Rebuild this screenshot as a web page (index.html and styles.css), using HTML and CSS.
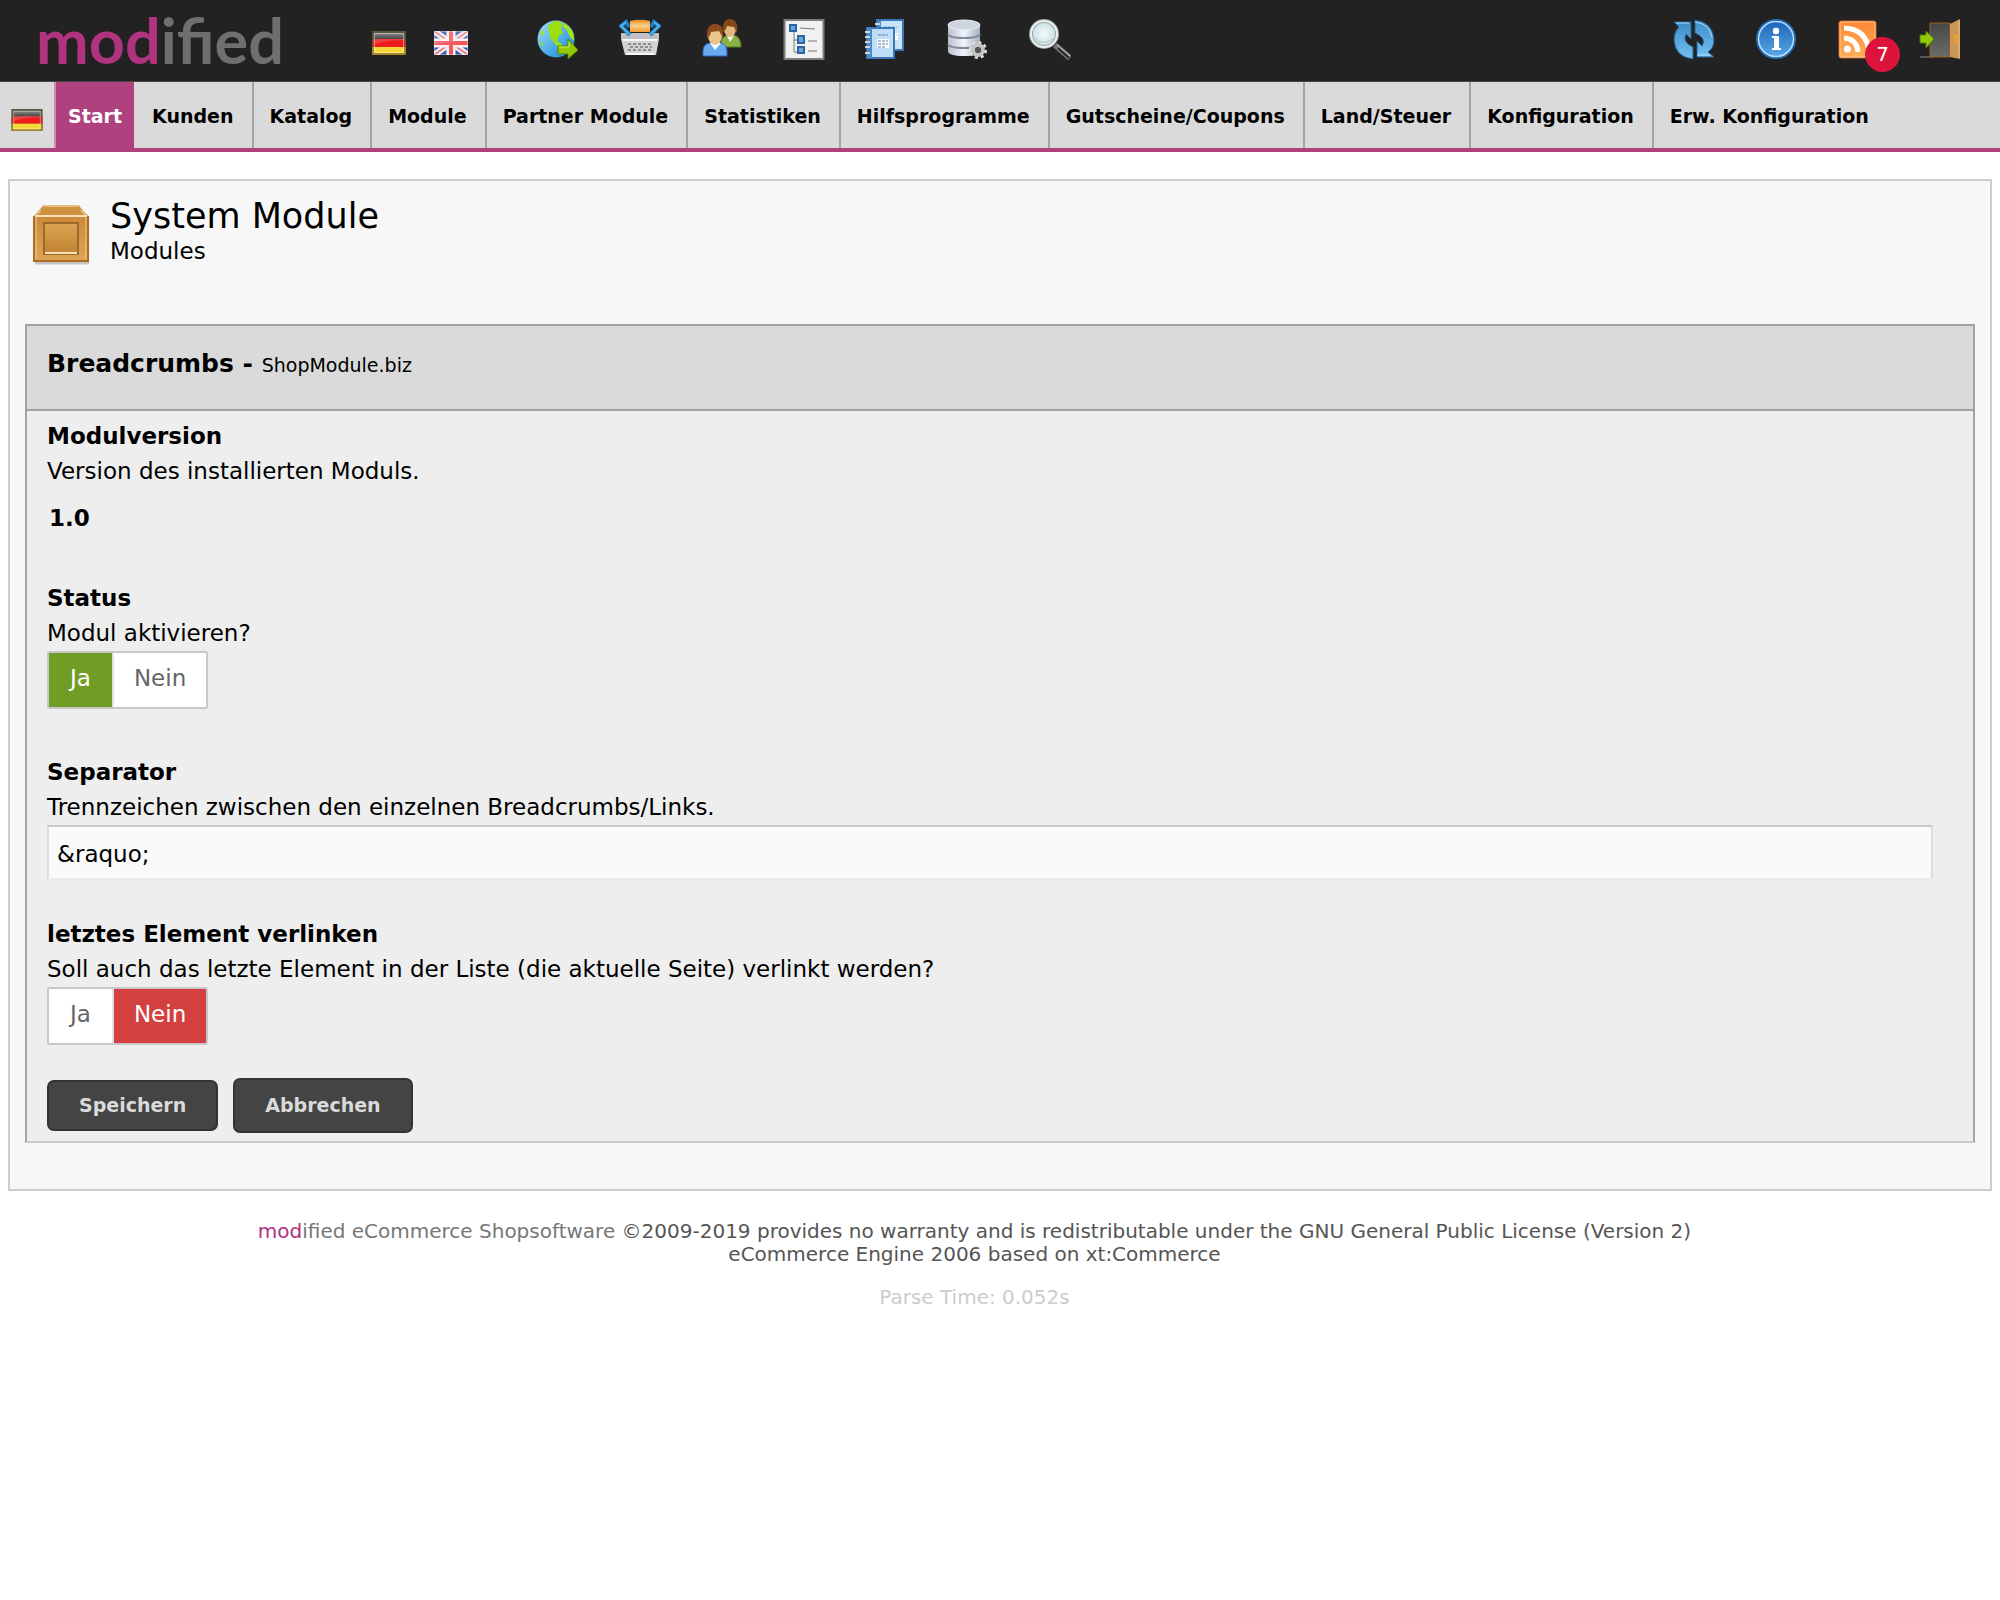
FILE: index.html
```html
<!DOCTYPE html>
<html lang="de">
<head>
<meta charset="utf-8">
<title>System Module</title>
<link rel="stylesheet" href="styles.css">
</head>
<body>
<svg class="defs" aria-hidden="true">
  <defs>
    <linearGradient id="blue" x1="0" y1="0" x2="1" y2="1"><stop offset="0" stop-color="#a5def8"/><stop offset="1" stop-color="#0b86d6"/></linearGradient>
    <linearGradient id="sky" x1="0" y1="0" x2="0" y2="1"><stop offset="0" stop-color="#3c8cc8"/><stop offset="1" stop-color="#74bff2"/></linearGradient>
    <linearGradient id="info" x1="0" y1="0" x2="0" y2="1"><stop offset="0" stop-color="#1c63b8"/><stop offset="1" stop-color="#5aaae8"/></linearGradient>
    <linearGradient id="rss" x1="0" y1="0" x2="0" y2="1"><stop offset="0" stop-color="#ff8636"/><stop offset="1" stop-color="#ffae55"/></linearGradient>
    <linearGradient id="silver" x1="0" y1="0" x2="1" y2="0"><stop offset="0" stop-color="#b9c2d0"/><stop offset=".5" stop-color="#f1f4f9"/><stop offset="1" stop-color="#a5afbf"/></linearGradient>
    <linearGradient id="wood" x1="0" y1="0" x2="0" y2="1"><stop offset="0" stop-color="#c58432"/><stop offset="1" stop-color="#e0a455"/></linearGradient>
    <linearGradient id="wood2" x1="0" y1="0" x2="0" y2="1"><stop offset="0" stop-color="#dda354"/><stop offset="1" stop-color="#c08132"/></linearGradient>
    <linearGradient id="bread" x1="0" y1="0" x2="0" y2="1"><stop offset="0" stop-color="#e58a1f"/><stop offset=".5" stop-color="#ffd08a"/><stop offset="1" stop-color="#ee9c31"/></linearGradient>
    <linearGradient id="door" x1="0" y1="0" x2="0" y2="1"><stop offset="0" stop-color="#464646"/><stop offset="1" stop-color="#6c6c6c"/></linearGradient>
    <radialGradient id="lens"><stop offset="0" stop-color="#f4fbfb"/><stop offset="1" stop-color="#c5dfe0"/></radialGradient>
    <linearGradient id="black" x1="0" y1="0" x2="0" y2="1"><stop offset="0" stop-color="#777"/><stop offset="1" stop-color="#222"/></linearGradient>
    <symbol id="flag-de" viewBox="0 0 34 24">
      <rect width="34" height="24" fill="#59583c"/>
      <path d="M0 9h34v7H0z" fill="#b3382c"/><path d="M0 16h34v8H0z" fill="#a98428"/>
      <path d="M2 2h30v6H2z" fill="url(#black)"/><path d="M2 8h30v8H2z" fill="#ee1c1c"/><path d="M2 16h30v6H2z" fill="#f4d93a"/>
      <path d="M2.500 2.500h29v19h-29z" fill="none" stroke="#fff" stroke-opacity=".4"/>
      <path d="M2 2h30v7Q16 9 2 13z" fill="#fff" opacity=".16"/>
    </symbol>
    <symbol id="flag-gb" viewBox="0 0 34 24">
      <rect width="34" height="24" fill="#3a5cb0"/>
      <path d="M0 0L34 24M34 0L0 24" stroke="#f3f0f6" stroke-width="6"/>
      <path d="M0 0L34 24M34 0L0 24" stroke="#e8838b" stroke-width="2"/>
      <path d="M17 0v24M0 12h34" stroke="#fbeef0" stroke-width="9"/>
      <path d="M17 0v24M0 12h34" stroke="#f2585c" stroke-width="4"/>
      <path d="M.5.5h33v23H.5z" fill="none" stroke="#fff" stroke-opacity=".35"/>
      <path d="M0 0h34v10Q16 10 0 14z" fill="#fff" opacity=".16"/>
    </symbol>
  </defs>
</svg>

<header class="topbar">
  <a class="logo" href="#"><span class="logo-accent">mod</span>ified</a>
  <nav class="languages" aria-label="Sprache">
    <a href="#" aria-label="Deutsch"><svg class="flag"><use href="#flag-de"/></svg></a>
    <a href="#" aria-label="English"><svg class="flag"><use href="#flag-gb"/></svg></a>
  </nav>
  <nav class="tools" aria-label="Werkzeuge">
    <a href="#" aria-label="Shop"><svg class="icon" viewBox="0 0 42 42">
      <circle cx="19" cy="20" r="18.500" fill="url(#blue)"/>
      <path d="M11 7Q15 2 22 2L26 5 24 9 26 14 22 17 20 22 25 25 26 31 21 28 14 20 12 13z" fill="#9be00e"/>
      <path d="M27 4Q38 10 37 22L33 18 30 11 26 8zM3 22l3 2-1 4zM4 14l2-4 1 4-2 4z" fill="#a5e515"/>
      <path d="M21 27h10v-7l10 11-10 9v-5H21z" fill="#93ca08" stroke="#547f0b"/>
      <path d="M22 28h10v-5" fill="none" stroke="#c8ee55"/>
    </svg></a>
    <a href="#" aria-label="Bestellungen"><svg class="icon" viewBox="0 0 42 42">
      <path d="M2 14h38v6l-3 16H6L2 20z" fill="#d3d3d6"/><path d="M2 14h38v6H2z" fill="#bfc0c4"/><path d="M4 21h34M8 35h27" stroke="#f6f6f6" stroke-width="2"/>
      <path d="M11 2Q21-.5 31 2v11H11z" fill="url(#bread)"/>
      <path d="M9 25h25M11 28h22M9 31h25" stroke="#8d8d91" stroke-width="2" stroke-dasharray="3 2"/>
      <path d="M11 16L2 7l5-4 3 5M31 16l9-9-5-4-3 5" fill="none" stroke="#1b7fbd" stroke-width="4"/>
      <path d="M11 16L2 7l5-4M31 16l9-9-5-4" fill="none" stroke="#51b2e6" stroke-width="2"/>
    </svg></a>
    <a href="#" aria-label="Kunden"><svg class="icon" viewBox="0 0 42 42">
      <path d="M20 28v-5q1-6 8-7h5q7 2 7 12z" fill="#88b144" stroke="#557b20"/><path d="M26 17l3 6 4-6z" fill="#f2f5ea"/>
      <ellipse cx="29" cy="10" rx="6" ry="8" fill="#e2b881"/><path d="M22 12Q21 0 29 0q9 1 7 14l-3-6-7-1q-1 5-4 5z" fill="#884716"/>
      <path d="M2 37v-6q1-7 8-7h10q6 2 6 8v5z" fill="#69aaf0" stroke="#2c68ba"/><path d="M9 24l5 7 6-7z" fill="#fff"/>
      <ellipse cx="14" cy="17" rx="7" ry="9" fill="#e9c48d"/><path d="M6 19Q5 5 14 5q10 0 8 14l-4-7-8 1q-1 5-4 6z" fill="#8d4c1b"/>
    </svg></a>
    <a href="#" aria-label="Struktur"><svg class="icon" viewBox="0 0 42 42">
      <path d="M1.500 1h39v39h-39z" fill="#f1f1f1" stroke="#7c7c7c" stroke-width="2"/>
      <path d="M11 13v20h5M11 21h5M17 9l15 1M25 22h9M25 32h9" fill="none" stroke="#777"/>
      <g fill="#6ba5da" stroke="#2d659f" stroke-width="2"><path d="M7 6h6v6H7zM15 17h6v7h-6zM15 28h6v6h-6z"/></g>
    </svg></a>
    <a href="#" aria-label="Content"><svg class="icon" viewBox="0 0 42 42">
      <path d="M12 1h26v30H12z" fill="#c9e4f8" stroke="#3977b6" stroke-width="2"/><path d="M12 2h4v28h-4z" fill="#4b8cc6"/>
      <path d="M25 14h8v7h-8z" fill="#fff"/><path d="M19 8h13M27 16h5" stroke="#6aa0cc" stroke-dasharray="3 1"/>
      <path d="M2 9h27v30H2z" fill="#bddef6" stroke="#3977b6" stroke-width="2"/><path d="M2 9h5v30H2z" fill="#4b8cc6"/>
      <path d="M12 20h12v9H12z" fill="#fff"/><path d="M13 16h10M13 22h10M13 25h10M13 28h7" stroke="#5a7c9b" stroke-dasharray="3 1"/>
      <path d="M0 13h5M0 18h5M0 23h5M0 28h5M0 34h5M10 5h5" stroke="#d5d5d5" stroke-width="2"/>
    </svg></a>
    <a href="#" aria-label="Datenbank"><svg class="icon" viewBox="0 0 42 42">
      <path d="M1 5v27q0 5 16 5t16-5V5z" fill="url(#silver)"/><ellipse cx="17" cy="6" rx="16" ry="5" fill="#cdd5df" stroke="#eef1f5"/>
      <path d="M1 15q1 4 16 4t16-4M1 25q1 4 16 4t16-4" fill="none" stroke="#7f899a" stroke-width="2"/>
      <circle cx="31" cy="31" r="7.500" fill="none" stroke="#ddd" stroke-width="3" stroke-dasharray="3.140 2.750"/>
      <circle cx="31" cy="31" r="5" fill="#777" stroke="#c4c4c4" stroke-width="4"/><circle cx="31" cy="31" r="3" fill="#555"/>
    </svg></a>
    <a href="#" aria-label="Suche"><svg class="icon" viewBox="0 0 42 42">
      <path d="M26 26L41 39" stroke="#747474" stroke-width="6"/><path d="M28 26L41 37" stroke="#cfcfcf" stroke-width="1"/><path d="M29 29L40 39" stroke="#292929" stroke-width="2"/>
      <circle cx="15" cy="15" r="13" fill="url(#lens)" stroke="#9aa5a7" stroke-width="4"/><circle cx="15" cy="15" r="13" fill="none" stroke="#eef0ef" stroke-width="2"/>
      <path d="M6 19q7 8 18 1" fill="none" stroke="#a9c8cb" stroke-width="1"/>
    </svg></a>
  </nav>
  <nav class="tools tools-right" aria-label="System">
    <a href="#" aria-label="Aktualisieren"><svg class="icon" viewBox="0 0 42 42">
      <path d="M1 3h17v17l-5-5q-4 8 7 13v12Q2 38 1 21q0-8 5-13z" fill="url(#sky)" stroke="#23618f"/>
      <path d="M41 38H24V22l5 5q5-8-7-13V1q18 2 19 20 0 8-6 12z" fill="url(#sky)" stroke="#23618f"/>
      <path d="M3 4h13M22 3q15 2 17 15M24 36h13" fill="none" stroke="#b6dff8"/>
    </svg></a>
    <a href="#" aria-label="Info"><svg class="icon" viewBox="0 0 42 42">
      <circle cx="21" cy="20" r="19" fill="url(#info)" stroke="#2269b5" stroke-width="2"/><circle cx="21" cy="20" r="17.500" fill="none" stroke="#b8dcf7" stroke-width="1.500"/>
      <circle cx="21" cy="12" r="3.200" fill="#fff"/><path d="M17 17h7v12h2v2h-9v-2h2V19h-2z" fill="#fff"/>
    </svg></a>
    <a class="news" href="#" aria-label="News"><svg class="icon" viewBox="0 0 42 42">
      <rect x="2" y="2" width="37" height="37" rx="2" fill="url(#rss)" stroke="#c95a1b"/><rect x="3" y="3" width="35" height="35" rx="1" fill="none" stroke="#ffc595"/>
      <circle cx="10.500" cy="30" r="3.500" fill="#fff"/><path d="M7 19q13 1 14 14M7 9q23 1 25 24" fill="none" stroke="#fff" stroke-width="5"/>
    </svg><span class="badge">7</span></a>
    <a href="#" aria-label="Abmelden"><svg class="icon" viewBox="0 0 42 42">
      <path d="M1 38h12" stroke="#555" stroke-width="2"/><path d="M11 4h20v34H11z" fill="url(#door)" stroke="#98641d"/>
      <path d="M31 5L41 0v40l-10-2z" fill="#cb9758"/><path d="M40 1v38" stroke="#e6bf84"/><path d="M39 17h-3v6h3" fill="none" stroke="#f1a516" stroke-width="2"/>
      <path d="M1 16h6v-4l8 8-8 9v-5H1z" fill="#94ca08" stroke="#527e08"/>
    </svg></a>
  </nav>
</header>

<nav class="menu" aria-label="Hauptmenü">
  <a class="menu-flag" href="#" aria-label="Deutsch"><svg class="flag flag-small"><use href="#flag-de"/></svg></a>
  <a class="active" href="#">Start</a>
  <a href="#">Kunden</a>
  <a href="#">Katalog</a>
  <a href="#">Module</a>
  <a href="#">Partner Module</a>
  <a href="#">Statistiken</a>
  <a href="#">Hilfsprogramme</a>
  <a href="#">Gutscheine/Coupons</a>
  <a href="#">Land/Steuer</a>
  <a href="#">Konfiguration</a>
  <a href="#">Erw. Konfiguration</a>
</nav>

<main class="page">
  <div class="page-head">
    <svg class="crate" viewBox="0 0 60 64" aria-hidden="true">
      <path d="M3 61h54" stroke="#000" stroke-opacity=".2" stroke-width="3"/>
      <path d="M12 3h34l10 11v45H2V14z" fill="url(#wood)"/>
      <path d="M12 3h34l10 11H2z" fill="#cf933f"/><path d="M12 4h34M9 8l-5 5M49 8l5 5" stroke="#e8bd82" stroke-width="2"/>
      <path d="M2 14v45h54V14" fill="none" stroke="#ad6b27" stroke-width="2"/>
      <path d="M4 57V14h50v43" fill="none" stroke="#edc991"/><path d="M3 14h52" stroke="#f8e0b8" stroke-width="2"/>
      <path d="M12 21h34v31H12z" fill="url(#wood2)" stroke="#9b6a2b" stroke-width="2"/><path d="M13 51h32" stroke="#f7e0b9" stroke-width="2"/>
    </svg>
    <div>
      <h1>System Module</h1>
      <p>Modules</p>
    </div>
  </div>

  <form class="box" onsubmit="return false">
    <h2>Breadcrumbs - <small>ShopModule.biz</small></h2>
    <div class="box-body">
      <section class="field field-version">
        <h3>Modulversion</h3>
        <p>Version des installierten Moduls.</p>
        <strong class="version">1.0</strong>
      </section>
      <section class="field field-switch" role="radiogroup" aria-labelledby="status">
        <h3 id="status">Status</h3>
        <p>Modul aktivieren?</p>
        <div class="switch">
          <label class="yes"><input type="radio" name="status" checked>Ja</label>
          <label class="no"><input type="radio" name="status">Nein</label>
        </div>
      </section>
      <section class="field">
        <h3><label for="separator">Separator</label></h3>
        <p>Trennzeichen zwischen den einzelnen Breadcrumbs/Links.</p>
        <input class="text" id="separator" type="text" value="&amp;raquo;">
      </section>
      <section class="field field-last" role="radiogroup" aria-labelledby="last">
        <h3 id="last">letztes Element verlinken</h3>
        <p>Soll auch das letzte Element in der Liste (die aktuelle Seite) verlinkt werden?</p>
        <div class="switch">
          <label class="yes"><input type="radio" name="last">Ja</label>
          <label class="no"><input type="radio" name="last" checked>Nein</label>
        </div>
      </section>
      <div class="actions">
        <button class="button" type="submit">Speichern</button>
        <a class="button button-link" href="#">Abbrechen</a>
      </div>
    </div>
  </form>
</main>

<footer class="footer">
  <p><a href="#"><span class="footer-accent">mod</span>ified eCommerce Shopsoftware</a> ©2009-2019 provides no warranty and is redistributable under the <a class="license" href="#">GNU General Public License (Version 2)</a></p>
  <p>eCommerce Engine 2006 based on xt:Commerce</p>
  <p class="parse">Parse Time: 0.052s</p>
</footer>
</body>
</html>
```

FILE: styles.css
```css
* { box-sizing: border-box; }

body {
  margin: 0;
  background: #fff;
  color: #000;
  font: 23px/28px Verdana, "DejaVu Sans", sans-serif;
}

h1, h2, h3, p { margin: 0; }
a { color: inherit; text-decoration: none; }
svg { display: block; }
.defs { position: absolute; width: 0; height: 0; }

.topbar {
  display: flex;
  align-items: center;
  height: 82px;
  padding: 0 39px 2px 36px;
  background: #222;
  border-bottom: 1px solid #444;
}

.logo {
  width: 336px;
  color: #6f6f6f;
  font: 700 63px/78px Lato, sans-serif;
}
.logo-accent { color: #b0337f; }

.languages { display: flex; gap: 28px; width: 165px; padding-top: 6px; }
.flag { width: 34px; height: 24px; }
.tools { display: flex; gap: 40px; }
.tools-right { margin-left: auto; }
.icon { width: 42px; height: 42px; }

.news { position: relative; }
.badge {
  position: absolute;
  top: 18px;
  left: 28px;
  width: 35px;
  height: 35px;
  border-radius: 50%;
  background: #dc143c;
  color: #fff;
  font-size: 20px;
  line-height: 35px;
  text-align: center;
}

.menu {
  display: flex;
  height: 70px;
  background: #dadada;
  border-bottom: 4px solid #af417e;
  font-size: 19px;
  font-weight: 700;
  line-height: 68px;
}
.menu a { padding: 0 18px 0 16px; border-left: 2px solid #a3a3a3; white-space: nowrap; }
.menu .menu-flag { display: flex; align-items: center; width: 54px; padding: 9px 0 0 11px; border: 0; }
.flag-small { width: 32px; height: 22px; }
.menu .active { padding: 0 12px; border-color: #d28ab2; background: #af417e; color: #fff; }
.menu .active + a { border-color: #dadada; }

.page {
  margin: 27px 8px 0;
  padding: 17px 15px 46px;
  background: #f7f7f7;
  border: 2px solid #ccc;
}
.page-head { display: flex; gap: 18px; height: 126px; padding-left: 7px; }
.page-head p { line-height: 34px; }
.crate { width: 60px; height: 64px; margin-top: 4px; }
h1 { font-size: 35px; font-weight: 400; line-height: 36px; }

.box { background: #eee; border: 2px solid #a3a3a3; border-bottom-color: #ccc; }
h2 {
  height: 85px;
  padding: 0 20px;
  background: #dadada;
  border-bottom: 2px solid #a3a3a3;
  font-size: 25px;
  line-height: 75px;
}
h2 small { font-size: 19px; font-weight: 400; }
.box-body { padding: 7px 20px 8px; }
.field { padding-bottom: 36px; }
.field h3 { font-size: 23px; line-height: 36px; }
.field p { line-height: 35px; }
.field-version { padding-bottom: 44px; }
.field-switch { padding-bottom: 45px; }
.field-last { padding-bottom: 33px; }
.version { display: block; padding: 11px 2px 0; line-height: 36px; }

.switch {
  display: flex;
  width: max-content;
  background: #fff;
  border: 2px solid #c8c8c8;
  border-radius: 3px;
}
.switch label { position: relative; height: 54px; padding: 0 21px; color: #666; line-height: 50px; }
.switch .no { padding: 0 20px; border-left: 2px solid #e0e0e0; }
.switch input { position: absolute; inset: 0; margin: 0; opacity: 0; }
.switch .yes:has(input:checked) { background: #709d25; color: #fff; }
.switch .no:has(input:checked) { background: #d34040; color: #fff; }

.text {
  display: block;
  width: calc(100% - 20px);
  height: 55px;
  padding: 2px 8px 0;
  background: #fafafa;
  border: 2px solid #ddd;
  border-top-color: #c8c8c8;
  border-bottom-color: #ececec;
  border-radius: 2px;
  color: #000;
  font: inherit;
}

.actions { display: flex; align-items: center; gap: 15px; }
.button {
  height: 51px;
  padding: 0 30px;
  background: #444;
  border: 2px solid #333;
  border-radius: 7px;
  color: #dadada;
  font: 700 19px/47px Verdana, "DejaVu Sans", sans-serif;
}
.button-link { height: 55px; line-height: 51px; }

.footer {
  padding: 29px 51px 0 0;
  color: #555;
  font-size: 20px;
  line-height: 23px;
  text-align: center;
}
.footer a { color: #777; }
.footer .footer-accent { color: #b0337f; }
.footer .license { color: #555; }
.footer .parse { padding-top: 20px; color: #ccc; }
```
